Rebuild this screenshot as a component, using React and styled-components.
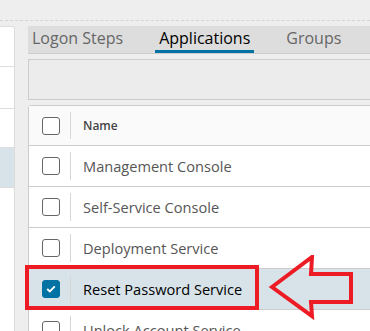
import React from "react"
import styled, { createGlobalStyle } from "styled-components"

const GlobalStyle = createGlobalStyle`
  html, body {
    margin: 0;
    padding: 0;
    background: #eeeeee;
    overflow: hidden;
  }
  body {
    font-family: "Open Sans", "Noto Sans", sans-serif;
  }
`

const rows = [
  { name: "Management Console" },
  { name: "Self-Service Console" },
  { name: "Deployment Service" },
  { name: "Reset Password Service", selected: true },
  { name: "Unlock Account Service" },
]

const tabs = ["Logon Steps", "Applications", "Groups"]

const App = () => {
  return (
    <Page>
      <GlobalStyle />
      <TopStrip />
      <Body>
        <SidePanel>
          <SideRow $h={42} />
          <SideRow $h={39} />
          <SideRow $h={41} $active />
        </SidePanel>
        <Main>
          <TabBar>
            {tabs.map((t) => (
              <Tab key={t} $active={t === "Applications"}>
                {t}
              </Tab>
            ))}
          </TabBar>
          <Toolbar />
          <Grid>
            <HeaderRow>
              <CheckCell $header>
                <Checkbox />
              </CheckCell>
              <HeaderCell>Name</HeaderCell>
            </HeaderRow>
            {rows.map((r) => (
              <Row key={r.name} $selected={r.selected}>
                <CheckCell>
                  <Checkbox $checked={r.selected}>
                    {r.selected && (
                      <svg width="10" height="8" viewBox="0 0 10 8">
                        <path
                          d="M1.2 4 L3.8 6.4 L8.8 1.4"
                          fill="none"
                          stroke="#fff"
                          strokeWidth="1.9"
                        />
                      </svg>
                    )}
                  </Checkbox>
                </CheckCell>
                <NameCell $selected={r.selected}>{r.name}</NameCell>
              </Row>
            ))}
          </Grid>
        </Main>
      </Body>
      <Highlight />
      <Arrow width="90" height="70" viewBox="0 0 90 70">
        <path
          d="M4 32 L44 2 L43 19 L83 19 L83 47 L43 47 L44 61 Z"
          fill="none"
          stroke="#ed1c24"
          strokeWidth="4"
          strokeLinejoin="miter"
        />
      </Arrow>
    </Page>
  )
}

export default App

const Page = styled.div`
  position: relative;
  width: 370px;
  height: 331px;
  overflow: hidden;
`

const TopStrip = styled.div`
  height: 20px;
  border-bottom: 1px dashed #d4d4d4;
`

const Body = styled.div`
  display: flex;
  gap: 13px;
  padding-top: 5px;
`

const SidePanel = styled.div`
  flex-shrink: 0;
  width: 15px;
  height: 320px;
  background: #ffffff;
  border: 1px solid #dddddd;
  border-left: none;
  border-radius: 0 3px 0 0;
  padding-top: 39px;
  box-sizing: border-box;
`

const SideRow = styled.div`
  height: ${(p) => p.$h}px;
  box-sizing: border-box;
  border-top: 1px solid #dddddd;
  border-bottom: ${(p) => (p.$active ? "1px solid #dddddd" : "none")};
  background: ${(p) => (p.$active ? "#d8e3e9" : "transparent")};
`

const Main = styled.div`
  width: 360px;
  flex-shrink: 0;
`

const TabBar = styled.div`
  display: flex;
  gap: 28px;
  height: 27px;
  background: #dddddd;
  border-bottom: 1px solid #cccccc;
`

const Tab = styled.div`
  padding: 0 4px;
  font-size: 16px;
  line-height: 24px;
  color: ${(p) => (p.$active ? "#000000" : "#666666")};
  border-bottom: 3px solid ${(p) => (p.$active ? "#0072a3" : "transparent")};
`

const Toolbar = styled.div`
  margin-top: 5px;
  height: 39px;
  background: #ececec;
  border: 1px solid #cccccc;
`

const Grid = styled.div`
  margin-top: 5px;
  background: #ffffff;
  border: 1px solid #cccccc;
  border-radius: 3px 0 0 0;
`

const HeaderRow = styled.div`
  display: flex;
  align-items: center;
  height: 39px;
  background: #fafafa;
  border-bottom: 1px solid #cccccc;
`

const Row = styled.div`
  display: flex;
  align-items: center;
  height: 40px;
  border-bottom: 1px solid #cccccc;
  background: ${(p) => (p.$selected ? "#d8e3e9" : "#ffffff")};
`

const CheckCell = styled.div`
  width: 42px;
  height: ${(p) => (p.$header ? "27px" : "28px")};
  box-sizing: border-box;
  display: flex;
  align-items: center;
  padding-left: 13px;
  border-right: 1px solid #d7d7d7;
`

const Checkbox = styled.div`
  width: 18px;
  height: 18px;
  box-sizing: border-box;
  border-radius: 3px;
  border: 1px solid ${(p) => (p.$checked ? "#0072a3" : "#666666")};
  background: ${(p) => (p.$checked ? "#0072a3" : "#ffffff")};
  display: flex;
  align-items: center;
  justify-content: center;
`

const HeaderCell = styled.div`
  padding-left: 12px;
  font-size: 12px;
  font-weight: 600;
  color: #454545;
`

const NameCell = styled.div`
  padding-left: 12px;
  font-size: 14.6px;
  color: ${(p) => (p.$selected ? "#000000" : "#565656")};
`

const Highlight = styled.div`
  position: absolute;
  left: 25px;
  top: 265px;
  width: 234px;
  height: 45px;
  box-sizing: border-box;
  border: 4px solid #ed1c24;
`

const Arrow = styled.svg`
  position: absolute;
  left: 268px;
  top: 255px;
`
